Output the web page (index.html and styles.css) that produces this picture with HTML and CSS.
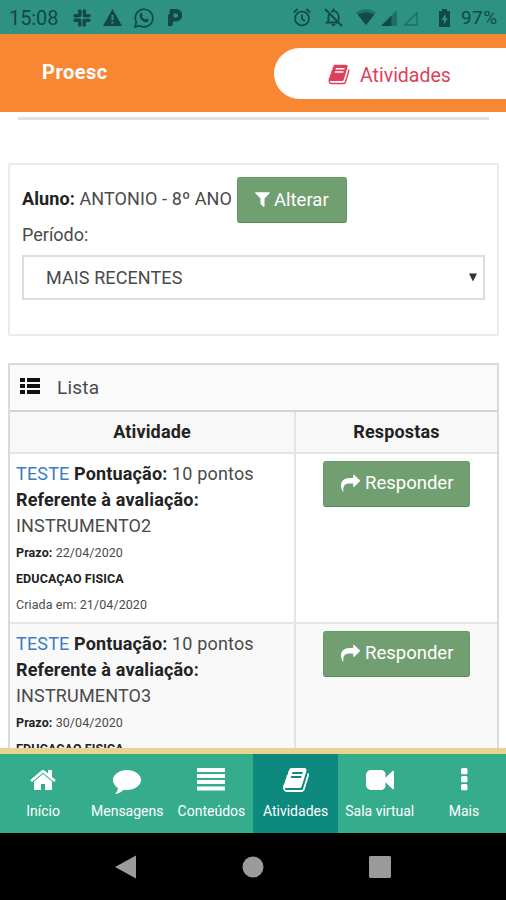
FILE: index.html
```html
<!DOCTYPE html>
<html lang="pt-BR">
<head>
<meta charset="utf-8">
<title>Proesc</title>
<link rel="stylesheet" href="styles.css">
</head>
<body>
<svg class="defs" aria-hidden="true">
  <symbol id="book" viewBox="0 0 1664 1792"><path d="M1639 478q40 57 18 129l-275 906q-19 64-76.500 107.500t-122.500 43.500h-923q-77 0-148.500-53.500t-99.500-131.500q-24-67-2-127 0-4 3-27t4-37q1-8-3-21.500t-3-19.500q2-11 8-21t16.500-23.500 16.500-23.500q23-38 45-91.500t30-91.500q3-10 .5-30t-.5-28q3-11 17-28t17-23q21-36 42-92t25-90q1-9-2.500-32t.5-28q4-13 22-30.500t22-22.500q19-26 42.500-84.500t27.500-96.500q1-8-3-25.500t-2-26.500q2-8 9-18t18-23 17-21q8-12 16.500-30.500t15-35 16-36 19.500-32 26.500-23.500 36-11.500 47.500 5.500l-1 3q38-9 51-9h761q74 0 114 56t18 130l-274 906q-36 119-71.500 153.500t-128.500 34.500h-869q-27 0-38 15-11 16-1 43 24 70 144 70h923q29 0 56-15.500t35-41.500l300-987q7-22 5-57 38 15 59 43zm-1064 2q-4 13 2 22.500t20 9.500h608q13 0 25.500-9.500t16.500-22.500l21-64q4-13-2-22.500t-20-9.500h-608q-13 0-25.500 9.500t-16.500 22.500zm-83 256q-4 13 2 22.500t20 9.500h608q13 0 25.500-9.500t16.500-22.500l21-64q4-13-2-22.500t-20-9.500h-608q-13 0-25.500 9.500t-16.500 22.500z"/></symbol>
  <symbol id="share" viewBox="0 0 1792 1792"><path d="M1792 640q0 26-19 45l-512 512q-19 19-45 19t-45-19-19-45v-256h-224q-98 0-175.500 6t-154 21.500-133 42.500-105.500 69.500-80 101-48.500 138.500-17.500 181q0 55 5 123 0 6 2.500 23.500t2.500 26.500q0 15-8.500 25t-23.500 10q-16 0-28-17-7-9-13-22t-13.500-30-10.500-24q-127-285-127-451 0-199 53-333 162-403 875-403h224v-256q0-26 19-45t45-19 45 19l512 512q19 19 19 45z"/></symbol>
</svg>

<div class="statusbar">
  <span class="clock">15:08</span>
  <svg class="s-slack" viewBox="0 0 18 18"><g stroke-width="3.400" stroke-linecap="round" fill="none" stroke="currentColor"><path d="M6.800 2v4.600M2 6.800h2.600M11.200 6.600h4.800M11.300 2v2M11.200 11.300v4.700M13.500 11.300h2.500M2 11.300h4.700M6.800 13.500v2.500"/></g></svg>
  <svg class="s-warn" viewBox="0 0 19 17"><path fill="currentColor" fill-rule="evenodd" d="M9.500 0 19 17H0zM8.500 6v5h2V6zm0 6.500v2h2v-2z"/></svg>
  <svg class="s-whats" viewBox="0 0 20 20"><path fill="none" stroke="currentColor" stroke-width="1.700" d="M1 19l1.300-4.800A8.800 8.800 0 1 1 5.700 17.700z"/><path fill="currentColor" d="M6.500 5.200c.7-.7 1.300-.3 1.600.4l.6 1.500c.1.500-.6 1.100-.8 1.400.7 1.400 1.900 2.500 3.400 3.100.4-.3.900-1.100 1.300-1l1.900 1c.7.500-.1 2.400-1.700 2.600-3.200.3-7.300-3.600-7.200-6.800 0-.8.400-1.700.9-2.200z"/></svg>
  <svg class="s-p" viewBox="0 0 14 17"><path fill="currentColor" fill-rule="evenodd" d="M2 0h6a6 6 0 0 1 0 12.500H5V15q0 2-2 2H0V6.500q0-1.500 1.500-1.500zM5.500 4.500v4H8a2 2 0 0 0 0-4z"/></svg>
  <span class="spacer"></span>
  <svg class="s-alarm" viewBox="0 0 18 19"><g fill="none" stroke="currentColor" stroke-width="1.700"><circle cx="9" cy="10.500" r="7"/><path d="M.7 4.500l4-3.500M17.300 4.500l-4-3.500M9 6.500v4.500l3 2"/></g></svg>
  <svg class="s-bell" viewBox="0 0 19 19"><path fill="none" stroke="currentColor" stroke-width="1.800" d="M1 1l17 17M5 6.500c-.7 1.300-.7 4-.7 6.500L3 14.500h11M7 3.800c4-2 7.700.7 7.700 4.700v4M9.500 3V.5"/><path fill="currentColor" d="M7.500 16h4a2 2 0 0 1-4 0z"/></svg>
  <svg class="s-wifi" viewBox="0 0 20 17"><path fill="currentColor" opacity=".45" d="M0 3.500C6-1 14-1 20 3.500L10 16z"/><path fill="currentColor" d="M2 5.700c5-3 11-3 16 0L10 16z"/></svg>
  <svg class="s-sig1" viewBox="0 0 16 16"><path fill="currentColor" opacity=".45" d="M16 0v16H0z"/><path fill="currentColor" d="M10.500 5.500V16H0z"/></svg>
  <svg class="s-sig2" viewBox="0 0 16 16"><path fill="none" stroke="currentColor" opacity=".5" stroke-width="1.300" d="M15 2.500V15H2.500z"/></svg>
  <svg class="s-bat" viewBox="0 0 11 18"><path fill="currentColor" fill-rule="evenodd" d="M3 0h5v2h3v16H0V2h3zM6.500 4.500 2.500 11H5v4.500L8.700 9H6.500z"/></svg>
  <span class="pct">97%</span>
</div>

<header class="top">
  <div class="brand">Proesc</div>
  <div class="pill"><svg viewBox="0 0 1664 1792"><use href="#book"/></svg><span>Atividades</span></div>
</header>

<main class="content">
  <hr class="rule">
  <section class="panel">
    <div class="student"><span class="name"><b>Aluno:</b> ANTONIO - 8º ANO</span>
      <button class="btn btn-filter"><svg viewBox="190 240 1412 1440"><path d="M1595 295q17 41-14 70l-493 493v742q0 42-39 59-13 5-25 5-27 0-45-19l-256-256q-19-19-19-45v-486l-493-493q-31-29-14-70 17-39 59-39h1280q42 0 59 39z"/></svg><span>Alterar</span></button>
    </div>
    <div class="label">Período:</div>
    <div class="select"><span>MAIS RECENTES</span><svg viewBox="0 0 8 8"><path d="M0 0h8L4 8z"/></svg></div>
  </section>

  <section class="list">
    <div class="list-title">
      <svg viewBox="0 0 20 16"><path d="M0 0h5v4H0zM7 0h13v4H7zM0 6h5v4H0zM7 6h13v4H7zM0 12h5v4H0zM7 12h13v4H7z"/></svg><span>Lista</span>
    </div>
    <div class="row head"><div class="cell">Atividade</div><div class="cell">Respostas</div></div>
    <div class="row">
      <div class="cell">
        <div class="line"><a>TESTE</a> <b>Pontuação:</b> 10 pontos</div>
        <div class="line"><b>Referente à avaliação:</b></div>
        <div class="line">INSTRUMENTO2</div>
        <div class="small"><b>Prazo:</b> 22/04/2020</div>
        <div class="small"><b>EDUCAÇAO FISICA</b></div>
        <div class="small">Criada em: 21/04/2020</div>
      </div>
      <div class="cell action"><button class="btn btn-reply"><svg viewBox="0 0 1792 1792"><use href="#share"/></svg><span>Responder</span></button></div>
    </div>
    <div class="row alt">
      <div class="cell">
        <div class="line"><a>TESTE</a> <b>Pontuação:</b> 10 pontos</div>
        <div class="line"><b>Referente à avaliação:</b></div>
        <div class="line">INSTRUMENTO3</div>
        <div class="small"><b>Prazo:</b> 30/04/2020</div>
        <div class="small"><b>EDUCAÇAO FISICA</b></div>
      </div>
      <div class="cell action"><button class="btn btn-reply"><svg viewBox="0 0 1792 1792"><use href="#share"/></svg><span>Responder</span></button></div>
    </div>
  </section>
</main>

<nav class="tabs">
  <div class="tab"><svg viewBox="0 0 1792 1792"><path d="M1472 992v480q0 26-19 45t-45 19h-384v-384h-256v384h-384q-26 0-45-19t-19-45v-480q0-1 .5-3t.5-3l575-474 575 474q1 2 1 6zm223-69l-62 74q-8 9-21 11h-3q-13 0-21-7l-692-577-692 577q-12 8-24 7-13-2-21-11l-62-74q-8-10-7-23.500t11-21.500l719-599q32-26 76-26t76 26l244 204v-195q0-14 9-23t23-9h192q14 0 23 9t9 23v408l219 182q10 8 11 21.500t-7 23.500z"/></svg><span>Início</span></div>
  <div class="tab"><svg viewBox="0 0 28 28"><path d="M14 4c7.700 0 14 4.500 14 10s-6.300 10-14 10c-1.200 0-2.400-.1-3.500-.3-2 1.900-4.500 3.700-8.500 4.300 1.500-1.500 2.700-3 3-6C1.900 20.200 0 17.300 0 14 0 8.500 6.300 4 14 4z"/></svg><span>Mensagens</span></div>
  <div class="tab"><svg viewBox="0 0 28 28"><path d="M0 2h28v4H0zM0 8h28v4H0zM0 14h28v4H0zM0 20.500h28v4H0z"/></svg><span>Conteúdos</span></div>
  <div class="tab active"><svg viewBox="0 0 1664 1792"><use href="#book"/></svg><span>Atividades</span></div>
  <div class="tab"><svg viewBox="0 0 28 28"><path d="M5 4h10a4.500 4.500 0 0 1 4.500 4.500v3.300L26.500 5q1.500-1 1.500.7v16.600q0 1.700-1.500.7l-7-6.800v3.300A4.500 4.500 0 0 1 15 24H5a5 5 0 0 1-5-5V9a5 5 0 0 1 5-5z"/></svg><span>Sala virtual</span></div>
  <div class="tab"><svg viewBox="0 0 28 28"><rect x="11" y="2" width="6.500" height="6.200" rx="1.500"/><rect x="11" y="10" width="6.500" height="6.200" rx="1.500"/><rect x="11" y="18" width="6.500" height="6.200" rx="1.500"/></svg><span>Mais</span></div>
</nav>

<div class="sysnav">
  <svg viewBox="0 0 22 24"><path d="M21 .5v23L0 12z"/></svg>
  <svg viewBox="0 0 22 24"><circle cx="11" cy="12" r="10.500"/></svg>
  <svg viewBox="0 0 22 24"><rect x="0" y="1" width="22" height="22" rx="1.500"/></svg>
</div>
</body>
</html>
```

FILE: styles.css
```css
* { box-sizing: border-box; }
html, body { margin: 0; height: 900px; overflow: hidden; }
body {
  width: 506px;
  display: flex;
  flex-direction: column;
  font-family: Roboto, "Liberation Sans", sans-serif;
  font-size: 18px;
  color: #4a4a4a;
  background: #fff;
}
svg { display: block; flex: none; fill: currentColor; }
.defs { position: absolute; width: 0; height: 0; }
.spacer { flex: 1; }
span, .line, .small { white-space: nowrap; }

.statusbar {
  flex: none;
  height: 34px;
  padding: 1px 7px 0 9px;
  display: flex;
  align-items: center;
  background: #2d9184;
  color: #124a43;
}
.clock { width: 50px; font-size: 20px; letter-spacing: -0.1px; }
.s-slack { width: 18px; height: 18px; margin-left: 14px; }
.s-warn { width: 19px; height: 17px; margin-left: 12px; }
.s-whats { width: 20px; height: 20px; margin-left: 12px; }
.s-p { width: 14px; height: 17px; margin-left: 14px; }
.s-alarm { width: 18px; height: 19px; }
.s-bell { width: 19px; height: 19px; margin-left: 13px; }
.s-wifi { width: 20px; height: 17px; margin-left: 13px; }
.s-sig1 { width: 16px; height: 16px; margin-left: 5px; }
.s-sig2 { width: 16px; height: 16px; margin-left: 5px; }
.s-bat { width: 11px; height: 18px; margin-left: 21px; }
.pct { width: 38px; margin-left: 11px; font-size: 19px; letter-spacing: 0.4px; }

.top {
  flex: none;
  height: 78px;
  display: flex;
  justify-content: space-between;
  background: #f78733;
}
.brand {
  padding: 26px 0 0 42px;
  font-size: 20px;
  line-height: 24px;
  font-weight: 700;
  letter-spacing: 0.5px;
  color: #fff;
}
.pill {
  width: 232px;
  height: 51px;
  margin-top: 14px;
  padding: 3px 0 0 54px;
  display: flex;
  align-items: center;
  border-radius: 26px 0 0 26px;
  background: #fff;
  color: #df3f5c;
  font-size: 19.5px;
}
.pill svg { width: 22px; height: 23px; margin: -2px 10px 0 0; }

.content { flex: 1; min-height: 0; overflow: hidden; padding: 0 7px 0 8px; }
.rule { height: 3px; margin: 5px 10px 44px; border: 0; background: #e0e1e9; }

.panel {
  height: 173px;
  margin-top: -1px;
  padding: 12px 12px 0 12px;
  border: 2px solid #ebebeb;
  border-radius: 2px;
}
.student { display: flex; height: 46px; }
.name { width: 215px; line-height: 43px; letter-spacing: 0.1px; }
.btn {
  display: flex;
  align-items: center;
  height: 46px;
  margin: 0;
  border: 1px solid #669a68;
  border-bottom-color: #588c5b;
  border-radius: 3px;
  background: #729f72;
  color: #fff;
  font: 18.500px Roboto, sans-serif;
}
.btn-filter { width: 110px; padding: 0 0 1px 17px; }
.btn-filter svg { width: 15px; height: 15px; margin-right: 4px; }
b { font-weight: 700; color: #222; }
.label { height: 32px; line-height: 24px; }
.select {
  height: 45px;
  padding: 0 6px 0 22px;
  display: flex;
  align-items: center;
  justify-content: space-between;
  border: 2px solid #dcdcdc;
  letter-spacing: 0.1px;
}
.select svg { width: 8px; height: 9px; color: #333; }

.list { margin-top: 27px; border: 2px solid #dadada; border-bottom: 0; }
.list-title {
  height: 47px;
  padding: 0 0 0 10px;
  display: flex;
  align-items: center;
  border-bottom: 2px solid #d2d2d2;
  background: #fafafa;
  font-size: 19px;
  letter-spacing: 0.2px;
}
.list-title svg { width: 20px; height: 16px; margin: -3px 17px 0 0; color: #111; }
.row { display: grid; grid-template-columns: 286px 1fr; height: 170px; border-bottom: 2px solid #e5e5e5; }
.row.head { height: 42px; background: #f8f8f8; }
.row.alt { background: #f9f9f9; }
.cell { padding: 7px 0 0 6px; border-right: 2px solid #e3e3e3; }
.cell + .cell { border-right: 0; }
.head .cell { padding: 0; text-align: center; line-height: 39px; font-weight: 700; letter-spacing: 0.15px; color: #222; }
.line { height: 26px; line-height: 26px; letter-spacing: 0.16px; }
a { color: #3b7dbf; }
.small { height: 26px; line-height: 28px; font-size: 12.500px; letter-spacing: 0.08px; }
.cell.action { padding: 7px 0 0 27px; }
.btn-reply { width: 147px; padding: 0 0 2px 17px; }
.btn-reply svg { width: 19px; height: 19px; margin-right: 5px; }

.tabs {
  flex: none;
  height: 85px;
  padding-left: 1px;
  display: grid;
  grid-template-columns: repeat(6, 1fr);
  border-top: 6px solid #e8d391;
  background: #35ad8d;
  color: #fff;
}
.tab { padding-top: 12px; display: flex; flex-direction: column; align-items: center; font-size: 14px; }
.tab svg { width: 28px; height: 28px; margin-bottom: 8px; }
.tab span { line-height: 18px; }
.tab.active { background: #0e897d; }

.sysnav {
  flex: none;
  height: 67px;
  padding: 0 115px;
  display: flex;
  justify-content: space-between;
  align-items: center;
  background: #000;
  color: #9b9b9b;
}
.sysnav svg { width: 22px; height: 24px; }
```
